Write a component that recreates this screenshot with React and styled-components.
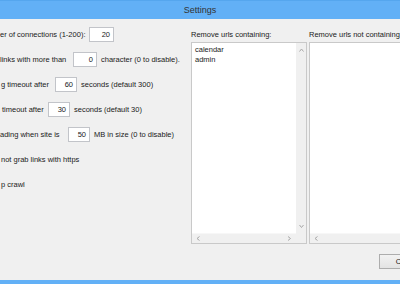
import styled, { createGlobalStyle } from "styled-components";

const GlobalStyle = createGlobalStyle`
  html, body {
    margin: 0;
    padding: 0;
    overflow: hidden;
    background: #f0f0f0;
  }
  body {
    font-family: "Liberation Sans", Arial, sans-serif;
  }
`;

const Window = styled.div`
  width: 400px;
  height: 284px;
  box-sizing: border-box;
  overflow: hidden;
  display: flex;
  flex-direction: column;
  background: #f0f0f0;
  border-bottom: 4px solid #62b0f6;
`;

const TitleBar = styled.div`
  flex: 0 0 19px;
  box-sizing: border-box;
  border-top: 1px solid #55a6ee;
  background: #62b0f6;
  display: flex;
  align-items: center;
  justify-content: center;
  font-size: 9px;
  color: #333;
`;

const Body = styled.div`
  flex: 1;
  display: flex;
  padding-top: 3px;
  font-size: 7.5px;
  color: #1a1a1a;
`;

const LeftColumn = styled.div`
  flex: 0 0 188px;
  display: flex;
  flex-direction: column;
`;

const Row = styled.div`
  height: 25px;
  display: flex;
  align-items: center;
  gap: 4px;
  white-space: nowrap;
  padding-left: ${(p) => p.$indent || 0}px;
`;

const Lead = styled.span`
  width: ${(p) => p.$w}px;
  flex-shrink: 0;
`;

const NumBox = styled.div`
  width: ${(p) => p.$w}px;
  height: 15px;
  box-sizing: border-box;
  flex-shrink: 0;
  background: #fff;
  border: 1px solid #c2c4c9;
  display: flex;
  align-items: center;
  justify-content: flex-end;
  padding-right: 3px;
  color: #1a1a1a;
`;

const RightArea = styled.div`
  flex: 0 0 245px;
  margin-left: 3px;
  display: flex;
  flex-direction: column;
`;

const Lists = styled.div`
  display: flex;
  gap: 2px;
`;

const ListCol = styled.div`
  width: 116px;
  display: flex;
  flex-direction: column;
`;

const ListLabel = styled.div`
  padding-top: 8px;
  line-height: 10px;
  margin-bottom: 2px;
  white-space: nowrap;
`;

const ListBox = styled.div`
  height: 202px;
  box-sizing: border-box;
  border: 1px solid #c9c9c9;
  display: grid;
  grid-template-columns: 1fr 10px;
  grid-template-rows: 1fr 10px;
  background: #fff;
`;

const ListContent = styled.div`
  padding: 2px 3px;
  line-height: 9.5px;
  background: #fff;
`;

const VScroll = styled.div`
  background: #f0f0f0;
  display: flex;
  flex-direction: column;
  justify-content: space-between;
  align-items: center;
  padding: 5px 0 4px;
`;

const HScroll = styled.div`
  background: #f0f0f0;
  border-top: 1px solid #f7f7f7;
  display: flex;
  justify-content: space-between;
  align-items: center;
  padding: 0 4px;
`;

const Corner = styled.div`
  background: #f0f0f0;
`;

const Footer = styled.div`
  display: flex;
  justify-content: flex-end;
  margin-top: 10px;
`;

const Button = styled.button`
  width: 57px;
  height: 15px;
  padding: 0;
  box-sizing: border-box;
  border: 1px solid #adadad;
  background: linear-gradient(#f2f2f2, #e3e3e3);
  font-family: inherit;
  font-size: 7.5px;
  color: #1a1a1a;
`;

function Chevron({ dir }) {
  const paths = {
    up: "M0.5 3.5 L2.5 1 L4.5 3.5",
    down: "M0.5 1 L2.5 3.5 L4.5 1",
    left: "M3.5 0.5 L1 2.5 L3.5 4.5",
    right: "M1 0.5 L3.5 2.5 L1 4.5",
  };
  return (
    <svg width="5" height="5" viewBox="0 0 5 5">
      <path d={paths[dir]} fill="none" stroke="#a8a8a8" strokeWidth="1" />
    </svg>
  );
}

function UrlList({ label, items, showV }) {
  return (
    <ListCol>
      <ListLabel>{label}</ListLabel>
      <ListBox>
        <ListContent>
          {items.map((it) => (
            <div key={it}>{it}</div>
          ))}
        </ListContent>
        <VScroll>
          {showV && <Chevron dir="up" />}
          {showV && <Chevron dir="down" />}
        </VScroll>
        <HScroll>
          <Chevron dir="left" />
          <Chevron dir="right" />
        </HScroll>
        <Corner />
      </ListBox>
    </ListCol>
  );
}

export default function App() {
  return (
    <>
      <GlobalStyle />
      <Window>
        <TitleBar>Settings</TitleBar>
        <Body>
          <LeftColumn>
            <Row>
              <Lead $w={85}>er of connections (1-200):</Lead>
              <NumBox $w={25}>20</NumBox>
            </Row>
            <Row>
              <Lead $w={69}>links with more than</Lead>
              <NumBox $w={24}>0</NumBox>
              <span>character (0 to disable).</span>
            </Row>
            <Row $indent={1}>
              <Lead $w={50}>g timeout after</Lead>
              <NumBox $w={22}>60</NumBox>
              <span>seconds (default 300)</span>
            </Row>
            <Row $indent={2}>
              <Lead $w={42}>timeout after</Lead>
              <NumBox $w={22}>30</NumBox>
              <span>seconds (default 30)</span>
            </Row>
            <Row>
              <Lead $w={64}>ading when site is</Lead>
              <NumBox $w={22}>50</NumBox>
              <span>MB in size (0 to disable)</span>
            </Row>
            <Row $indent={1}>
              <span>not grab links with https</span>
            </Row>
            <Row $indent={1}>
              <span>p crawl</span>
            </Row>
          </LeftColumn>
          <RightArea>
            <Lists>
              <UrlList
                label="Remove urls containing:"
                items={["calendar", "admin"]}
                showV
              />
              <UrlList label="Remove urls not containing:" items={[]} />
            </Lists>
            <Footer>
              <Button type="button">Cancel</Button>
            </Footer>
          </RightArea>
        </Body>
      </Window>
    </>
  );
}
